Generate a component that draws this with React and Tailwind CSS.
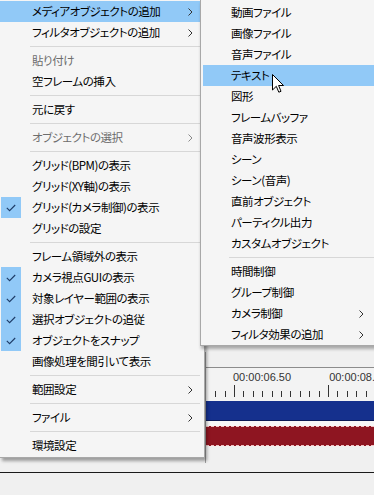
import React from "react";

const mainMenu = [
  { label: "メディアオブジェクトの追加", arrow: true, active: true },
  { label: "フィルタオブジェクトの追加", arrow: true },
  { sep: true },
  { label: "貼り付け", disabled: true },
  { label: "空フレームの挿入" },
  { sep: true },
  { label: "元に戻す" },
  { sep: true },
  { label: "オブジェクトの選択", arrow: true, disabled: true },
  { sep: true },
  { label: "グリッド(BPM)の表示" },
  { label: "グリッド(XY軸)の表示" },
  { label: "グリッド(カメラ制御)の表示", checked: true },
  { label: "グリッドの設定" },
  { sep: true },
  { label: "フレーム領域外の表示" },
  { label: "カメラ視点GUIの表示", checked: true },
  { label: "対象レイヤー範囲の表示", checked: true },
  { label: "選択オブジェクトの追従", checked: true },
  { label: "オブジェクトをスナップ", checked: true },
  { label: "画像処理を間引いて表示" },
  { sep: true },
  { label: "範囲設定", arrow: true },
  { sep: true },
  { label: "ファイル", arrow: true },
  { sep: true },
  { label: "環境設定" },
];

const subMenu = [
  { label: "動画ファイル" },
  { label: "画像ファイル" },
  { label: "音声ファイル" },
  { label: "テキスト", active: true },
  { label: "図形" },
  { label: "フレームバッファ" },
  { label: "音声波形表示" },
  { label: "シーン" },
  { label: "シーン(音声)" },
  { label: "直前オブジェクト" },
  { label: "パーティクル出力" },
  { label: "カスタムオブジェクト" },
  { sep: true },
  { label: "時間制御" },
  { label: "グループ制御" },
  { label: "カメラ制御", arrow: true },
  { label: "フィルタ効果の追加", arrow: true },
];

const Chevron = ({ color }) => (
  <svg width="5" height="8" viewBox="0 0 5 8" className="shrink-0">
    <path d="M0.5 0.5 L4 4 L0.5 7.5" fill="none" stroke={color} strokeWidth="1" />
  </svg>
);

const Check = () => (
  <svg width="10" height="8" viewBox="0 0 10 8">
    <path d="M0.8 3.8 L3.6 6.6 L9.2 1" fill="none" stroke="#1d3b66" strokeWidth="1.1" />
  </svg>
);

const MenuItem = ({ item, textLeft, arrowRight }) => {
  if (item.sep) {
    return (
      <div className="h-[7px] flex items-center">
        <div className="h-px w-full bg-[#d7d7d7]" style={{ marginLeft: textLeft - 3 }} />
      </div>
    );
  }
  const color = item.disabled ? "#6d6d6d" : "#000";
  return (
    <div
      className={
        "h-[21px] flex items-center " + (item.active ? "bg-[#91c9f7]" : "")
      }
    >
      <div
        className={
          "h-full flex items-center justify-center shrink-0 " +
          (item.checked ? "bg-[#91c9f7]" : "")
        }
        style={{ width: 20, marginLeft: 1 }}
      >
        {item.checked && <Check />}
      </div>
      <span
        className="flex-1 whitespace-nowrap text-[11.5px] tracking-[-0.45px] leading-none [font-feature-settings:'palt']"
        style={{ color, marginLeft: textLeft - 21 - 1 }}
      >
        {item.label}
      </span>
      {item.arrow && (
        <span style={{ marginRight: arrowRight }}>
          <Chevron color={item.disabled ? "#8a8a8a" : "#333"} />
        </span>
      )}
    </div>
  );
};

const Ruler = () => {
  const ticks = [];
  for (let i = -2; i < 16; i++) {
    const x = 28 + i * 9.4;
    if (x < 0 || x > 170) continue;
    const long = i % 10 === 0;
    ticks.push(
      <line
        key={i}
        x1={Math.round(x) + 0.5}
        x2={Math.round(x) + 0.5}
        y1={long ? 17 : 23}
        y2={29}
        stroke="#333"
        strokeWidth="1"
      />
    );
  }
  return (
    <svg width="169" height="30" className="block">
      {ticks}
    </svg>
  );
};

export default function App() {
  return (
    <div className="relative w-[374px] h-[495px] overflow-hidden bg-[#f0f0f0] font-['Noto_Sans_CJK_JP','Noto_Sans',sans-serif]">
      {/* timeline in the background */}
      <div className="flex flex-col">
        <div className="h-[352px]" />
        <div className="ml-[205px] h-[111px] border-l border-[#a0a0a0] flex flex-col">
          <div className="h-[16px] border-b border-[#8c8c8c]" />
          <div className="relative h-[33px] bg-[#f3f3f3] overflow-hidden">
            <div className="flex h-[15px] items-end font-['Liberation_Sans',sans-serif] text-[11px] leading-none text-[#333] whitespace-nowrap">
              <span className="ml-[27px]">00:00:06.50</span>
              <span className="ml-[38px]">00:00:08.6</span>
            </div>
            <div className="absolute left-0 top-0">
              <Ruler />
            </div>
          </div>
          <div className="h-[20px] bg-[#15308d] border-b border-[#0c1a55]" />
          <div className="h-[5px] bg-[#f6f6f6]" />
          <div className="h-[20px] bg-[#8e1521] border-y border-dashed border-[#f3c3c3]" />
        </div>
        <div className="h-[9px]" />
        <div className="h-px bg-[#1a1a1a]" />
      </div>

      {/* main context menu */}
      <div className="absolute left-0 top-0 w-[205px] h-[458px] bg-[#f5f5f5] border-r border-b border-[#a8a8a8] pt-[1px] pr-[4px] shadow-[2px_3px_3px_rgba(0,0,0,0.35)]">
        {mainMenu.map((item, i) => (
          <MenuItem key={i} item={item} textLeft={33} arrowRight={7} />
        ))}
      </div>

      {/* submenu */}
      <div className="absolute left-[200px] top-0 w-[176px] h-[346px] bg-[#f5f5f5] border-l border-b border-[#a8a8a8] pt-[2px] pl-[2px] pr-[2px] shadow-[1px_3px_3px_rgba(0,0,0,0.3)]">
        {subMenu.map((item, i) => (
          <MenuItem key={i} item={item} textLeft={29} arrowRight={10} />
        ))}
      </div>

      {/* mouse cursor */}
      <svg
        width="13"
        height="20"
        viewBox="0 0 13 20"
        className="absolute left-[272px] top-[74px]"
      >
        <path
          d="M0.5 0.5 L0.5 16 L4.3 12.3 L6.8 18.2 L9 17.3 L6.6 11.5 L11.5 11.5 Z"
          fill="#fff"
          stroke="#000"
          strokeWidth="1"
          strokeLinejoin="round"
        />
      </svg>
    </div>
  );
}
